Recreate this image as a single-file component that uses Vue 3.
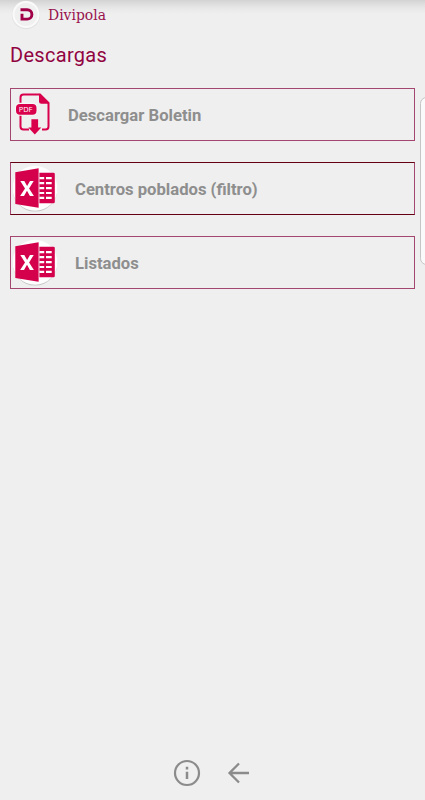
<script setup>
const items = [
  { label: 'Descargar Boletin', icon: 'pdf' },
  { label: 'Centros poblados (filtro)', icon: 'excel', dark: true },
  { label: 'Listados', icon: 'excel' },
]
</script>

<template>
  <div class="screen">
    <header class="bar">
      <svg class="logo" width="30" height="30" viewBox="0 0 30 30">
        <circle cx="15" cy="15" r="14.2" fill="#e2e2e3" />
        <circle cx="15" cy="14.500" r="13.600" fill="#fafafa" />
        <circle cx="15" cy="14.500" r="11.500" fill="#f0f0f0" />
        <path d="M9.500 9.700H16.200a4.700 4.700 0 0 1 0 9.400h-5.200v-5.300" fill="none" stroke="#a10049" stroke-width="2.900" />
      </svg>
      <span class="brand">Divipola</span>
    </header>
    <h1 class="title">Descargas</h1>
    <main class="list">
      <button v-for="item in items" :key="item.label" class="row" :class="[item.icon, { dark: item.dark }]">
        <svg v-if="item.icon === 'pdf'" class="icon" width="38" height="46" viewBox="0 0 38 46">
          <path d="M5.500 12V5.500q0-3 3-3H25L33.500 11v23.500q0 3-3 3H27M5.500 23v11.500q0 3 3 3H14" fill="none" stroke="#d9004c" stroke-width="2" />
          <path d="M24 1.500L34.300 11.800H26.500Q24 11.800 24 9.300Z" fill="#d9004c" />
          <rect x="0" y="10.800" width="22.500" height="13" rx="5" fill="#f7f7f7" />
          <rect x="1" y="12" width="20.500" height="10.800" rx="4" fill="#d9004c" />
          <text x="3.700" y="20.200" class="pdf-text" textLength="13.800" lengthAdjust="spacingAndGlyphs">PDF</text>
          <path d="M16.400 27.300h6.700v8.200h3.200L19.800 42.500l-6.500-7h3.100Z" fill="#d9004c" />
        </svg>
        <svg v-else class="icon" width="46" height="48" viewBox="0 0 46 48">
          <circle cx="22" cy="24.300" r="22.300" fill="#c4c4c4" />
          <circle cx="22" cy="23.300" r="22.500" fill="#fdfdfd" />
          <g transform="translate(0 -0.500)">
            <path d="M2.300 7.800L25.600 3.800v39.400L2.300 39.500Z" fill="#d4004b" />
            <path d="M26.400 8.200h14q1.400 0 1.400 1.400v27.800q0 1.400-1.400 1.400h-14Z" fill="#d4004b" />
            <path d="M26.400 13.600h4.800M26.400 18.600h4.800M26.400 23.600h4.800M26.400 28.500h4.800M26.400 33.400h4.800M33 13.600h5.700M33 18.600h5.700M33 23.600h5.700M33 28.500h5.700M33 33.400h5.700" stroke="#fff" stroke-width="2.100" />
            <path d="M7.300 16.500h4l2.800 5 2.900-5h3.700l-4.600 7.400 4.800 7.600h-4l-2.900-5.200-3 5.200H7.100l4.900-7.600Z" fill="#fff" />
          </g>
        </svg>
        <span class="label">{{ item.label }}</span>
      </button>
    </main>
    <footer class="nav">
      <svg width="28" height="28" viewBox="0 0 28 28">
        <circle cx="14" cy="14" r="12" fill="none" stroke="#8b8b8b" stroke-width="2.200" />
        <path d="M14 12.700v7.300M14 7.800v2.600" stroke="#8b8b8b" stroke-width="2.500" />
      </svg>
      <svg width="24" height="24" viewBox="0 0 24 24">
        <path d="M22 12H3.500M12 2.500L2.500 12l9.500 9.500" fill="none" stroke="#8b8b8b" stroke-width="2.300" />
      </svg>
    </footer>
    <div class="edge-handle"></div>
  </div>
</template>

<style>
body {
  background: #efefef;
}
</style>

<style scoped>
.screen {
  position: relative;
  box-sizing: border-box;
  height: 800px;
  overflow: hidden;
  display: flex;
  flex-direction: column;
  background: linear-gradient(#d2d2d2, #dedede 4px, #e9e9e9 9px, #efefef 14px);
  font-family: Roboto, sans-serif;
}
.bar {
  display: flex;
  align-items: center;
  height: 30px;
  padding-left: 11px;
}
.logo {
  flex: none;
}
.brand {
  margin-left: 7px;
  font-family: "Roboto Slab", "DejaVu Serif", serif;
  font-size: 14.500px;
  line-height: 20px;
  color: #99114d;
  transform: scaleX(0.960);
  transform-origin: left;
}
.title {
  margin: 12px 0 0 10px;
  font-size: 20px;
  line-height: 26px;
  font-weight: 400;
  letter-spacing: 0.300px;
  color: #910441;
}
.list {
  display: flex;
  flex-direction: column;
  gap: 21px;
  padding: 20px 10px 0;
}
.row {
  display: flex;
  align-items: center;
  box-sizing: border-box;
  height: 53px;
  padding: 0 0 0 2px;
  border: 1px solid #a34670;
  background: none;
  font-family: inherit;
  text-align: left;
}
.row.dark {
  border-top-color: #650013;
  border-bottom-color: #650013;
}
.row.pdf {
  padding-left: 4px;
}
.icon {
  flex: none;
}
.pdf-text {
  font-family: "Open Sans", sans-serif;
  font-size: 7.500px;
  fill: #fff;
}
.label {
  margin-left: 16px;
  padding-top: 3px;
  font-size: 16.650px;
  line-height: 22px;
  font-weight: 700;
  color: #8e8e8e;
}
.pdf .label {
  margin-left: 15px;
}
.nav {
  display: flex;
  align-items: center;
  justify-content: center;
  gap: 26px;
  height: 54px;
  margin-top: auto;
  padding-right: 2px;
}
.edge-handle {
  position: absolute;
  top: 97px;
  right: -8px;
  box-sizing: border-box;
  width: 13px;
  height: 168px;
  border: 1px solid #c5c5c5;
  border-radius: 7px;
  background: #fafafa;
}
</style>
